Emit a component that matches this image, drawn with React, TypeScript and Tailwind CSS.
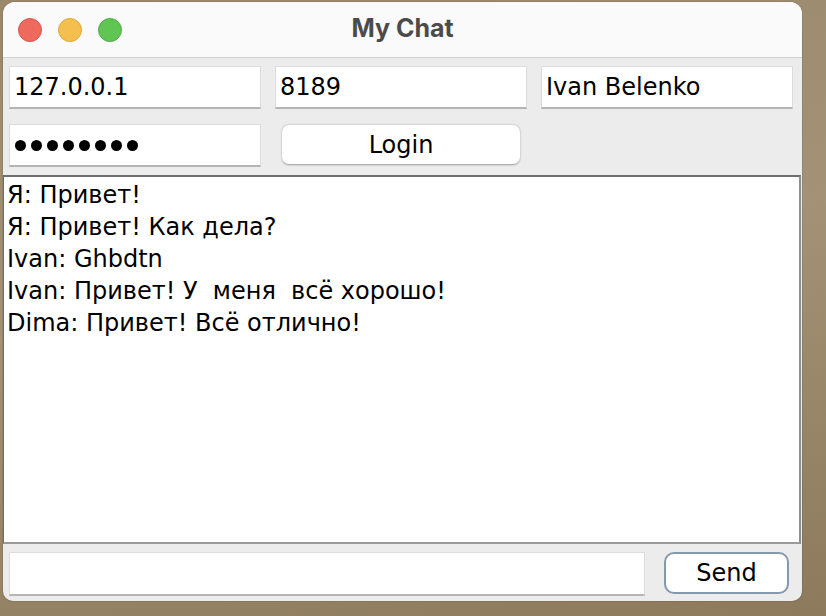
import React from "react";

const font = { fontFamily: '"DejaVu Sans", "Noto Sans", sans-serif' };

function Field({ children, className = "" }: { children?: React.ReactNode; className?: string }) {
  return (
    <div
      className={
        "flex items-center bg-white border border-[#dcdcdc] border-b-[#b4b4b4] border-b-2 pl-[4px] text-[24px] text-black " +
        className
      }
    >
      {children}
    </div>
  );
}

export default function App() {
  const lines = [
    "Я: Привет!",
    "Я: Привет! Как дела?",
    "Ivan: Ghbdtn",
    "Ivan: Привет! У  меня  всё хорошо!",
    "Dima: Привет! Всё отлично!",
  ];
  return (
    <div
      className="w-[826px] h-[616px] overflow-hidden pl-[3px] pt-[2px] bg-[linear-gradient(170deg,#9a886b_0%,#a39275_45%,#8d7a5d_100%)]"
      style={font}
    >
      <div className="w-[799px] h-[599px] flex flex-col rounded-t-[12px] rounded-b-[10px] overflow-hidden bg-[#ececec] shadow-[0_0_0_1px_rgba(0,0,0,0.08)]">
        {/* title bar */}
        <div className="relative h-[56px] shrink-0 bg-[#fafafa] border-b border-[#d2d2d2] flex items-center justify-center">
          <div className="absolute left-[15px] top-[16px] flex gap-[16px]">
            <div className="w-[24px] h-[24px] rounded-full bg-[#ee6a5f] border border-[#d9574d]" />
            <div className="w-[24px] h-[24px] rounded-full bg-[#f5bf4f] border border-[#dea73c]" />
            <div className="w-[24px] h-[24px] rounded-full bg-[#61c554] border border-[#4fae42]" />
          </div>
          <div
            className="text-[25px] font-bold text-[#4b4b4b] -mt-[1px]"
            style={{ fontFamily: 'Inter, "Liberation Sans", sans-serif' }}
          >
            My Chat
          </div>
        </div>

        {/* top form */}
        <div className="pt-[8px] px-[6px] shrink-0">
          <div className="grid grid-cols-[252px_252px_252px] gap-x-[14px]">
            <Field className="h-[43px]">127.0.0.1</Field>
            <Field className="h-[43px]">8189</Field>
            <Field className="h-[43px]">Ivan Belenko</Field>
          </div>
          <div className="grid grid-cols-[252px_252px_252px] gap-x-[14px] mt-[15px]">
            <Field className="h-[43px] gap-[5px] pl-[5px]">
              {Array.from({ length: 8 }).map((_, i) => (
                <span key={i} className="w-[11px] h-[11px] rounded-full bg-black mt-[1px]" />
              ))}
            </Field>
            <div className="pl-[7px] pr-[7px] pt-[1px]">
              <button className="w-full h-[39px] bg-white rounded-[7px] text-[24px] text-black shadow-[0_0.5px_2px_rgba(0,0,0,0.35)] flex items-center justify-center">
                Login
              </button>
            </div>
            <div />
          </div>
        </div>

        {/* chat area */}
        <div className="mt-[8px] h-[369px] shrink-0 bg-white border-t-2 border-t-[#6e6e6e] border-l border-l-[#6e6e6e] border-r-2 border-r-[#8e8e8e] border-b-2 border-b-[#9a9a9a] mr-[1px] pt-[2px] pl-[3px] text-[24px] leading-[32px] text-black">
          {lines.map((l, i) => (
            <div key={i} className="whitespace-pre">
              {l}
            </div>
          ))}
        </div>

        {/* bottom bar */}
        <div className="flex-1 flex items-start pt-[8px] pl-[6px]">
          <div className="w-[636px] h-[44px] bg-white border border-[#dcdcdc] border-b-2 border-b-[#b4b4b4]" />
          <button className="ml-[19px] w-[125px] h-[42px] bg-white rounded-[10px] border-2 border-[#8598b0] text-[24px] text-black flex items-center justify-center">
            Send
          </button>
        </div>
      </div>
    </div>
  );
}
